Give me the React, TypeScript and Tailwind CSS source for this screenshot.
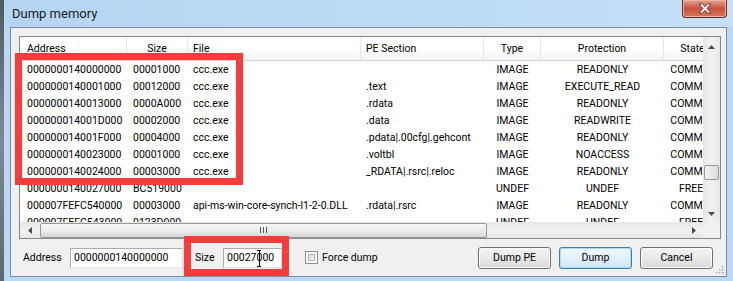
const rows: string[][] = [
  ['0000000140000000', '00001000', 'ccc.exe', '', 'IMAGE', 'READONLY', 'COMMIT'],
  ['0000000140001000', '00012000', 'ccc.exe', '.text', 'IMAGE', 'EXECUTE_READ', 'COMMIT'],
  ['0000000140013000', '0000A000', 'ccc.exe', '.rdata', 'IMAGE', 'READONLY', 'COMMIT'],
  ['000000014001D000', '00002000', 'ccc.exe', '.data', 'IMAGE', 'READWRITE', 'COMMIT'],
  ['000000014001F000', '00004000', 'ccc.exe', '.pdata|.00cfg|.gehcont', 'IMAGE', 'READONLY', 'COMMIT'],
  ['0000000140023000', '00001000', 'ccc.exe', '.voltbl', 'IMAGE', 'NOACCESS', 'COMMIT'],
  ['0000000140024000', '00003000', 'ccc.exe', '_RDATA|.rsrc|.reloc', 'IMAGE', 'READONLY', 'COMMIT'],
  ['0000000140027000', 'BC519000', '', '', 'UNDEF', 'UNDEF', 'FREE'],
  ['000007FEFC540000', '00003000', 'api-ms-win-core-synch-l1-2-0.DLL', '.rdata|.rsrc', 'IMAGE', 'READONLY', 'COMMIT'],
  ['000007FEFC543000', '0123D000', '', '', 'UNDEF', 'UNDEF', 'FREE'],
];

// column widths + alignment (header, cell)
const cols = [
  { label: 'Address', cell: 'w-[107px] pl-[7px] text-left', head: 'w-[107px] pl-[7px] text-left' },
  { label: 'Size', cell: 'w-[61px] pl-[6px] text-left', head: 'w-[61px] text-center' },
  { label: 'File', cell: 'w-[173px] pl-[5px] text-left', head: 'w-[173px] pl-[5px] text-left' },
  { label: 'PE Section', cell: 'w-[123px] pl-[5px] text-left', head: 'w-[123px] pl-[5px] text-left' },
  { label: 'Type', cell: 'w-[57px] text-center', head: 'w-[57px] text-center' },
  { label: 'Protection', cell: 'w-[123px] text-center', head: 'w-[123px] text-center' },
  { label: 'State', cell: 'w-[54px] text-center', head: 'w-[54px] pl-[4px] text-center' },
];

function Arrow({ dir }: { dir: 'up' | 'down' | 'left' | 'right' }) {
  const pts = {
    up: '0,4 3.5,0 7,4',
    down: '0,0 3.5,4 7,0',
    left: '4,0 0,3.5 4,7',
    right: '0,0 4,3.5 0,7',
  }[dir];
  const vert = dir === 'up' || dir === 'down';
  return (
    <svg width={vert ? 7 : 4} height={vert ? 4 : 7} viewBox={vert ? '0 0 7 4' : '0 0 4 7'}>
      <polygon points={pts} fill="#4a4a4a" />
    </svg>
  );
}

function Button({ children, focus }: { children: string; focus?: boolean }) {
  return (
    <div
      className={
        focus
          ? 'flex h-[22px] w-[73px] items-center justify-center rounded-[3px] border border-[#3c7fb1] bg-gradient-to-b from-[#f1f8fd] via-[#e3f1fb] to-[#cde6f7] shadow-[inset_0_0_0_1px_#a8dcf8]'
          : 'flex h-[22px] w-[73px] items-center justify-center rounded-[3px] border border-[#707070] bg-gradient-to-b from-[#f4f4f4] via-[#e9e9e9] to-[#d8d8d8] shadow-[inset_0_0_0_1px_#fcfcfc]'
      }
    >
      {children}
    </div>
  );
}

export default function App() {
  return (
    <div className="relative flex h-[281px] w-[733px] overflow-hidden bg-[#bad8f4] font-['Roboto','Liberation_Sans',sans-serif] text-[10.5px] text-black">
      {/* desktop edge behind the window */}
      <div className="w-[4px] shrink-0 bg-gradient-to-b from-[#4f5a62] via-[#7e8b94] to-[#5c6770]" />

      <div className="flex flex-1 flex-col">
        {/* Title bar */}
        <div className="flex h-[27px] shrink-0 items-start bg-gradient-to-r from-[#b6d5f2] via-[#bcdaf6] to-[#c6e0f7]">
          <span className="pl-[8px] pt-[4px] text-[13px] text-[#1b1b1b]">Dump memory</span>
          <div className="ml-auto mr-[6px] flex h-[18px] w-[45px] items-center justify-center rounded-b-[4px] border border-t-0 border-[#6b2a22] bg-gradient-to-b from-[#e4a394] via-[#c8513d] to-[#d2775a] shadow-[inset_0_0_0_1px_#eeb5a6]">
            <svg width="14" height="11" viewBox="0 0 14 11">
              <path d="M1 1h3.5L7 3.8 9.5 1H13L9 5.5 13 10H9.5L7 7.2 4.5 10H1L5 5.5z" fill="#fff" stroke="#5a2a24" strokeWidth="0.8" strokeLinejoin="round" />
            </svg>
          </div>
        </div>

        {/* Frame + client */}
        <div className="flex flex-1 pb-[4px] pl-[6px] pr-[6px]">
          <div className="relative flex flex-1 flex-col border border-[#7d8c9c] bg-[#f0f0f0]">
            {/* List view */}
            <div className="ml-[8px] mt-[8px] h-[203px] w-[702px] border border-[#828790] bg-white">
              <div className="grid h-full grid-cols-[683px_17px] grid-rows-[185px_16px]">
                {/* table viewport */}
                <div className="overflow-hidden">
                  <div className="flex h-[24px] w-max border-b border-[#d5d5d5] bg-gradient-to-b from-white via-white to-[#f3f4f6]">
                    {cols.map((c) => (
                      <div key={c.label} className={`${c.head} shrink-0 whitespace-nowrap border-r border-[#e2e5ea] leading-[23px]`}>
                        {c.label}
                      </div>
                    ))}
                  </div>
                  {rows.map((r, i) => (
                    <div key={i} className="flex h-[17px] w-max">
                      {r.map((v, j) => (
                        <div key={j} className={`${cols[j].cell} shrink-0 whitespace-nowrap leading-[17px]`}>
                          {v}
                        </div>
                      ))}
                    </div>
                  ))}
                </div>

                {/* vertical scrollbar */}
                <div className="flex flex-col bg-gradient-to-r from-[#e6e6e6] via-[#f2f2f2] to-[#e6e6e6]">
                  <div className="flex h-[17px] items-center justify-center pt-[2px]">
                    <Arrow dir="up" />
                  </div>
                  <div className="flex-1">
                    <div className="mx-[1px] mt-[111px] h-[15px] rounded-[2px] border border-[#979797] bg-gradient-to-r from-[#f5f5f5] to-[#dcdcdc]" />
                  </div>
                  <div className="flex h-[17px] items-center justify-center">
                    <Arrow dir="down" />
                  </div>
                </div>

                {/* horizontal scrollbar */}
                <div className="flex bg-gradient-to-b from-[#e6e6e6] via-[#f2f2f2] to-[#e6e6e6]">
                  <div className="flex w-[17px] items-center justify-center pl-[3px]">
                    <Arrow dir="left" />
                  </div>
                  <div className="flex flex-1 items-center">
                    <div className="ml-[3px] flex h-[15px] w-[447px] items-center justify-center rounded-[2px] border border-[#979797] bg-gradient-to-b from-[#f7f7f7] via-[#ececec] to-[#d6d6d6]">
                      <div className="flex gap-[2px]">
                        <div className="h-[6px] w-px bg-[#555]" />
                        <div className="h-[6px] w-px bg-[#555]" />
                        <div className="h-[6px] w-px bg-[#555]" />
                      </div>
                    </div>
                  </div>
                  <div className="flex w-[17px] items-center justify-center pr-[2px]">
                    <Arrow dir="right" />
                  </div>
                </div>
                <div className="bg-[#f0f0f0]" />
              </div>
            </div>

            {/* Bottom controls */}
            <div className="flex flex-1 items-center pl-[12px] pr-[13px]">
              <span className="w-[47px]">Address</span>
              <div className="flex h-[20px] w-[113px] items-center border border-[#abadb3] border-b-[#e3e9ef] border-r-[#dbdfe6] bg-white pl-[3px]">
                0000000140000000
              </div>
              <span className="ml-[12px] w-[28px]">Size</span>
              <div className="relative flex h-[20px] w-[59px] items-center border border-[#abadb3] border-b-[#e3e9ef] border-r-[#dbdfe6] bg-white pl-[3px]">
                00027000
                {/* I-beam cursor */}
                <div className="absolute left-[33px] top-[1px] flex h-[17px] flex-col items-center">
                  <div className="h-px w-[4px] bg-black" />
                  <div className="w-px flex-1 bg-black" />
                  <div className="h-px w-[4px] bg-black" />
                </div>
              </div>
              <div className="ml-[23px] h-[13px] w-[13px] border border-[#8e8f8f] bg-white p-[2px]">
                <div className="h-full w-full border border-[#b4b4b4] bg-gradient-to-br from-[#d8d8d8] to-[#f6f6f6]" />
              </div>
              <span className="ml-[4px]">Force dump</span>
              <div className="ml-auto flex gap-[8px]">
                <Button>Dump PE</Button>
                <Button focus>Dump</Button>
                <Button>Cancel</Button>
              </div>
            </div>

            {/* size grip */}
            <svg className="absolute bottom-[2px] right-[2px]" width="10" height="10" viewBox="0 0 10 10">
              {[[8, 2], [8, 5], [5, 5], [8, 8], [5, 8], [2, 8]].map(([x, y], k) => (
                <rect key={k} x={x} y={y} width="1.5" height="1.5" fill="#a8a8a8" />
              ))}
            </svg>
          </div>
        </div>
      </div>

      {/* red annotation boxes */}
      <div className="pointer-events-none absolute left-[15px] top-[53px] h-[132px] w-[228px] border-[7px] border-[#f83c3c]" />
      <div className="pointer-events-none absolute left-[184px] top-[236px] h-[40px] w-[105px] border-[7px] border-[#f83c3c]" />
    </div>
  );
}
